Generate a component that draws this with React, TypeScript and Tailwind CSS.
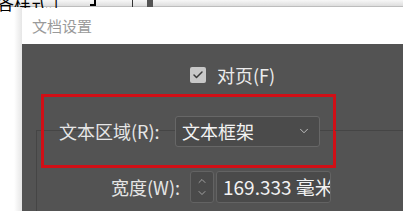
import { Check, ChevronDown, ChevronUp } from "lucide-react";

const font = { fontFamily: '"Noto Sans CJK SC", "Noto Sans", sans-serif' };

function Spinner() {
  return (
    <div className="flex h-[32px] w-[24px] flex-col items-center justify-center rounded-[3px] border border-[#636363] bg-[#4a4a4a] text-[#cfcfcf]">
      <ChevronUp className="h-[12px] w-[14px]" strokeWidth={1.3} />
      <ChevronDown className="h-[12px] w-[14px]" strokeWidth={1.3} />
    </div>
  );
}

export default function App() {
  return (
    <div
      className="relative h-[211px] w-[403px] overflow-hidden bg-white"
      style={font}
    >
      {/* app behind the dialog */}
      <div className="flex h-[7px] items-start border-b border-[#bdbdbd] bg-gradient-to-b from-[#f7f7f7] to-[#dedede]">
        <span className="-ml-[3px] -mt-[7px] whitespace-nowrap text-[17px] leading-[20px] text-black">
          各样式.]
        </span>
        <div className="ml-[32px] h-[6px] w-[6px] border-b-2 border-r-2 border-black" />
        <div className="ml-[36px] h-[7px] w-[1px] bg-[#333]" />
        <div className="ml-[14px] h-[7px] w-[6px] bg-[#555]" />
      </div>
      <div className="absolute left-[14px] top-[7px] h-[204px] w-[8px] bg-gradient-to-r from-white to-[#e6e6e6]" />

      {/* dialog window */}
      <div className="absolute left-[22px] top-[8px] flex h-[203px] w-[381px] flex-col">
        <div className="flex h-[36px] items-center bg-white pl-[10px] text-[15px] text-[#9a9a9a]">
          文档设置
        </div>
        <div className="flex flex-1 flex-col bg-[#535353]">
          <div className="flex items-center gap-[11px] pl-[168px] pt-[21px]">
            <div className="flex h-[16px] w-[16px] items-center justify-center rounded-[2px] bg-[#c8c8c8]">
              <Check className="h-[12px] w-[12px] text-[#3a3a3a]" strokeWidth={3} />
            </div>
            <span className="text-[18px] leading-[20px] text-[#ececec]">对页(F)</span>
          </div>

          {/* group box with red highlight over it */}
          <div className="ml-[14px] mt-[45px] flex flex-1 flex-col border-l border-t border-[#454545]">
            <div className="relative -mt-[37px] ml-[4px] flex h-[74px] w-[295px] items-center border-[3px] border-[#d10f16] pl-[15px]">
              <span className="w-[116px] whitespace-nowrap text-[18px] text-[#e6e6e6]">文本区域(R):</span>
              <div className="flex h-[31px] w-[145px] items-center justify-between rounded-[3px] border border-[#676767] bg-[#4b4b4b] pl-[6px] pr-[7px]">
                <span className="text-[18px] text-[#f2f2f2]">文本框架</span>
                <ChevronDown className="h-[14px] w-[16px] text-[#d8d8d8]" strokeWidth={1.4} />
              </div>
            </div>
            <div className="mt-[3px] flex items-center">
              <span className="w-[143px] whitespace-nowrap text-right text-[18px] text-[#e6e6e6]">宽度(W):</span>
              <div className="ml-[10px] flex items-center gap-[2px]">
                <Spinner />
                <div className="flex h-[32px] w-[115px] items-center overflow-hidden rounded-[3px] border border-[#636363] bg-[#4a4a4a] pl-[6px]">
                  <span className="whitespace-nowrap text-[19px] text-[#f2f2f2]">169.333 毫米</span>
                </div>
              </div>
            </div>
          </div>
        </div>
      </div>
      <div className="absolute left-[335px] top-[130px] h-[1px] w-[68px] bg-[#454545]" />
    </div>
  );
}
